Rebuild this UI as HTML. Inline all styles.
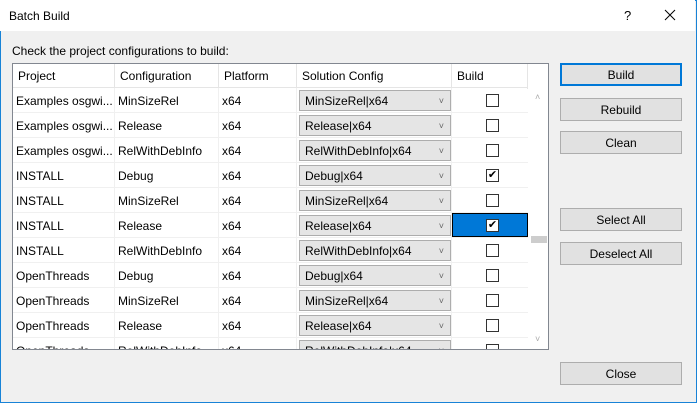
<!DOCTYPE html>
<html><head><style>
*{margin:0;padding:0;box-sizing:border-box}
body{width:697px;height:403px;overflow:hidden;background:#f0f0f0;font-family:"Liberation Sans",sans-serif;font-size:12px;color:#000;position:relative}
.win{position:absolute;left:0;top:0;width:697px;height:403px;border:1px solid #1883d7}
.title{position:absolute;left:0;top:0;width:695px;height:31px;background:#fff}
.a{position:absolute;white-space:nowrap}
.tbl{position:absolute;left:12px;top:63px;width:537px;height:287px;border:1px solid #828790;background:#fff;overflow:hidden}
.row{position:absolute;left:0;width:515px;height:25px;border-bottom:1px solid #f0f0f0}
.c{position:absolute;top:0;height:25px;line-height:26px;padding-left:3px;border-right:1px solid #f0f0f0;overflow:hidden}
.hd .c{line-height:25px;padding-left:5px;border-right:1px solid #e5e5e5}
.cb{position:absolute;left:286px;top:2px;width:152px;height:21px;background:#e5e5e5;border:1px solid #adadad;line-height:21px;padding-left:5px}
.cb:after{content:"\02C5";position:absolute;right:6px;top:0;font-size:9px;color:#666}
.ck{position:absolute;left:473px;top:6px;width:13px;height:13px;border:1px solid #333;background:#fff;font-size:11px;line-height:11px;text-align:center}
.btn{position:absolute;left:560px;width:122px;height:23px;background:#e1e1e1;border:1px solid #adadad;text-align:center;line-height:23px}
.sb{position:absolute;left:516px;top:24px;width:19px;height:262px;background:#fff}
</style></head><body>
<div class="win"></div>
<div class="title"></div>
<div class="a" style="left:9px;top:9px">Batch Build</div>
<div class="a" style="left:624px;top:8px;font-size:13px">?</div>
<svg class="a" style="left:664px;top:9px" width="12" height="12"><path d="M1 1L11 11M11 1L1 11" stroke="#000" stroke-width="1"/></svg>
<div class="a" style="left:12px;top:44px">Check the project configurations to build:</div>
<div class="tbl">
<div class="row hd" style="top:0;height:24px;border-bottom:1px solid #e5e5e5">
<div class="c" style="left:0;width:102px">Project</div><div class="c" style="left:102px;width:104px">Configuration</div><div class="c" style="left:206px;width:78px">Platform</div><div class="c" style="left:284px;width:155px">Solution Config</div><div class="c" style="left:439px;width:76px">Build</div>
</div>
<div id="rows"></div>
<div class="sb"><div class="a" style="left:6px;top:4px;font-size:9px;color:#aaa">˄</div><div class="a" style="left:2px;top:148px;width:16px;height:7px;background:#cdcdcd"></div><div class="a" style="left:6px;top:246px;font-size:9px;color:#aaa">˅</div></div>
</div>
<div class="btn" style="top:63px;border:2px solid #0078d7;line-height:21px">Build</div>
<div class="btn" style="top:98px">Rebuild</div>
<div class="btn" style="top:131px">Clean</div>
<div class="btn" style="top:208px">Select All</div>
<div class="btn" style="top:242px">Deselect All</div>
<div class="btn" style="top:362px">Close</div>
<script>
var d=[["Examples osgwi...","MinSizeRel","MinSizeRel|x64",0],["Examples osgwi...","Release","Release|x64",0],["Examples osgwi...","RelWithDebInfo","RelWithDebInfo|x64",0],["INSTALL","Debug","Debug|x64",1],["INSTALL","MinSizeRel","MinSizeRel|x64",0],["INSTALL","Release","Release|x64",2],["INSTALL","RelWithDebInfo","RelWithDebInfo|x64",0],["OpenThreads","Debug","Debug|x64",0],["OpenThreads","MinSizeRel","MinSizeRel|x64",0],["OpenThreads","Release","Release|x64",0],["OpenThreads","RelWithDebInfo","RelWithDebInfo|x64",0]];
var h="";d.forEach(function(r,i){var t=24+i*25;
var sel=r[3]==2?'<div class="a" style="left:439px;top:0;width:76px;height:24px;background:#0078d7;border:1px solid #000"></div>':'';
h+='<div class="row" style="top:'+t+'px"><div class="c" style="left:0;width:102px">'+r[0]+'</div><div class="c" style="left:102px;width:104px">'+r[1]+'</div><div class="c" style="left:206px;width:78px">x64</div><div class="c" style="left:284px;width:155px"></div>'+sel+'<div class="cb">'+r[2]+'</div><div class="ck">'+(r[3]?'✔':'')+'</div></div>';});
document.getElementById("rows").innerHTML=h;
</script>
</body></html>
